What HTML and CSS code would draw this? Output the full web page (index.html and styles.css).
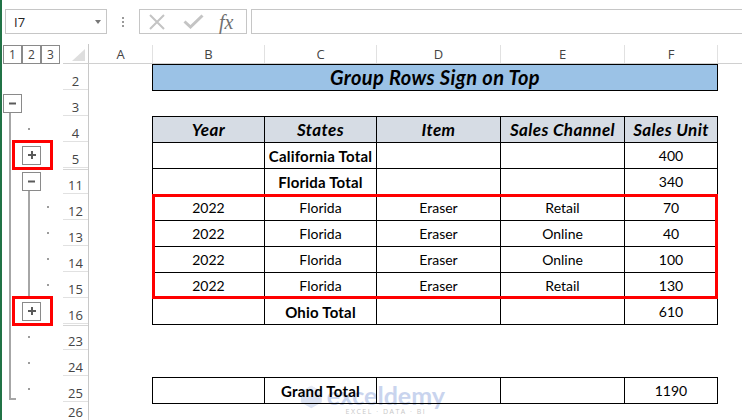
FILE: index.html
```html
<!DOCTYPE html>
<html lang="en">

<head>
    <meta charset="UTF-8">
    <meta name="viewport" content="width=device-width, initial-scale=1.0">
    <title>Group Rows Sign on Top</title>
    <link rel="stylesheet" href="styles.css">
</head>

<body>
    <div class="app">
        <div class="formula-bar">
            <div class="name-box"><span>I7</span><span class="caret"></span></div>
            <div class="grip"><i></i><i></i><i></i></div>
            <div class="fx-buttons">
                <svg class="fx-cancel" width="18" height="16" viewBox="0 0 18 16">
                    <path d="M2 1L16 15M16 1L2 15" stroke="#c4c4c4" stroke-width="2" fill="none" />
                </svg>
                <svg class="fx-enter" width="21" height="15" viewBox="0 0 21 15">
                    <path d="M1.5 7.5L7.5 13L19.5 1.5" stroke="#c4c4c4" stroke-width="3" fill="none" />
                </svg>
                <span class="fx-label">fx</span>
            </div>
            <div class="formula-input"></div>
        </div>

        <div class="sheet">
            <div class="levels"><span>1</span><span>2</span><span>3</span></div>
            <div class="corner">
                <svg width="13" height="12" viewBox="0 0 13 12">
                    <polygon points="13,0 13,12 0,12" fill="#dedede" />
                </svg>
            </div>
            <div class="col-heads">
                <div class="ch ch-a">A</div>
                <div class="ch ch-b">B</div>
                <div class="ch ch-c">C</div>
                <div class="ch ch-d">D</div>
                <div class="ch ch-e">E</div>
                <div class="ch ch-f">F</div>
                <div class="ch ch-g"></div>
            </div>

            <!-- outline gutter: level 1 / 2 / 3 columns -->
            <div class="outline">
                <div class="vline l1"></div>
                <div class="vline l2"></div>
                <div class="btn c2 r2"><svg width="7" height="7"><path d="M0 3.5h7" stroke="#5a5a5a" stroke-width="2" /></svg></div>
                <div class="dot c3 r3"></div>
                <div class="btn c3 r4"><svg width="8" height="8"><path d="M0 4h8M4 0v8" stroke="#5a5a5a" stroke-width="2" /></svg></div>
                <div class="btn c3 r5"><svg width="7" height="7"><path d="M0 3.5h7" stroke="#5a5a5a" stroke-width="2" /></svg></div>
                <div class="dot c4 r6"></div>
                <div class="dot c4 r7"></div>
                <div class="dot c4 r8"></div>
                <div class="dot c4 r9"></div>
                <div class="btn c3 r10"><svg width="8" height="8"><path d="M0 4h8M4 0v8" stroke="#5a5a5a" stroke-width="2" /></svg></div>
                <div class="dot c3 r11"></div>
                <div class="dot c3 r12"></div>
                <div class="dot c3 r13"></div>
                <div class="mark mark-a"></div>
                <div class="mark mark-b"></div>
            </div>

            <div class="row-heads">
                <div class="rh">2</div>
                <div class="rh">3</div>
                <div class="rh">4</div>
                <div class="rh">5</div>
                <div class="rh gap">11</div>
                <div class="rh">12</div>
                <div class="rh">13</div>
                <div class="rh">14</div>
                <div class="rh">15</div>
                <div class="rh">16</div>
                <div class="rh gap">23</div>
                <div class="rh">24</div>
                <div class="rh">25</div>
                <div class="rh last">26</div>
            </div>

            <div class="cells">
                <div class="title">Group Rows Sign on Top</div>

                <div class="wrap">
                    <table class="data">
                        <colgroup>
                            <col class="w-year">
                            <col class="w-state">
                            <col class="w-item">
                            <col class="w-channel">
                            <col class="w-unit">
                        </colgroup>
                        <tr>
                            <th>Year</th>
                            <th>States</th>
                            <th>Item</th>
                            <th>Sales Channel</th>
                            <th>Sales Unit</th>
                        </tr>
                        <tr>
                            <td></td>
                            <td class="sum">California Total</td>
                            <td></td>
                            <td></td>
                            <td>400</td>
                        </tr>
                        <tr>
                            <td></td>
                            <td class="sum">Florida Total</td>
                            <td></td>
                            <td></td>
                            <td>340</td>
                        </tr>
                        <tr>
                            <td>2022</td>
                            <td>Florida</td>
                            <td>Eraser</td>
                            <td>Retail</td>
                            <td>70</td>
                        </tr>
                        <tr>
                            <td>2022</td>
                            <td>Florida</td>
                            <td>Eraser</td>
                            <td>Online</td>
                            <td>40</td>
                        </tr>
                        <tr>
                            <td>2022</td>
                            <td>Florida</td>
                            <td>Eraser</td>
                            <td>Online</td>
                            <td>100</td>
                        </tr>
                        <tr>
                            <td>2022</td>
                            <td>Florida</td>
                            <td>Eraser</td>
                            <td>Retail</td>
                            <td>130</td>
                        </tr>
                        <tr>
                            <td></td>
                            <td class="sum">Ohio Total</td>
                            <td></td>
                            <td></td>
                            <td>610</td>
                        </tr>
                    </table>
                    <div class="highlight"></div>
                </div>

                <table class="data grand">
                    <colgroup>
                        <col class="w-year">
                        <col class="w-state">
                        <col class="w-item">
                        <col class="w-channel">
                        <col class="w-unit">
                    </colgroup>
                    <tr>
                        <td></td>
                        <td class="sum">Grand Total</td>
                        <td></td>
                        <td></td>
                        <td>1190</td>
                    </tr>
                </table>

                <div class="watermark">
                    <svg width="26" height="28" viewBox="0 0 26 28">
                        <polygon points="13,1 25,8 25,20 13,27 1,20 1,8" fill="#dbe2f2" />
                        <polygon points="13,1 25,8 13,14 1,8" fill="#e8ecf6" />
                    </svg>
                    <div class="wm-text">
                        <span class="wm-name">exceldemy</span>
                        <span class="wm-sub">EXCEL · DATA · BI</span>
                    </div>
                </div>
            </div>
        </div>
    </div>
</body>

</html>
```

FILE: styles.css
```css
* {
    box-sizing: border-box;
}

body {
    margin: 0;
    background-color: #fff;
    font-family: 'Open Sans', sans-serif;
    color: #333;
}

.app {
    width: 742px;
    height: 420px;
    overflow: hidden;
    border-left: 2px solid #217346;
}

/* formula bar */
.formula-bar {
    display: flex;
    height: 44px;
    padding-top: 9px;
}

.name-box {
    width: 102px;
    height: 25px;
    margin-left: 3px;
    border: 1px solid #c6c6c6;
    display: flex;
    align-items: center;
    justify-content: space-between;
    padding: 0 5px 0 8px;
    font-size: 13px;
    color: #222;
}

.caret {
    border-left: 3.5px solid transparent;
    border-right: 3.5px solid transparent;
    border-top: 4px solid #777;
}

.grip {
    width: 32px;
    height: 25px;
    display: flex;
    flex-direction: column;
    align-items: center;
    justify-content: center;
    gap: 2px;
}

.grip i {
    width: 2px;
    height: 2px;
    background-color: #9a9a9a;
}

.fx-buttons {
    width: 108px;
    height: 25px;
    border: 1px solid #c6c6c6;
    display: flex;
    align-items: center;
    padding-left: 8px;
}

.fx-enter {
    margin-left: 17px;
}

.fx-label {
    margin-left: 15px;
    font-family: 'Liberation Serif', serif;
    font-style: italic;
    font-size: 20px;
    color: #707070;
    line-height: 1;
}

.formula-input {
    flex: 1;
    height: 25px;
    margin-left: 4px;
    border: 1px solid #c6c6c6;
    border-right: none;
}

/* sheet */
.sheet {
    display: grid;
    grid-template-columns: 61px 26px 1fr;
    grid-template-rows: 20px 356px;
}

.levels {
    display: flex;
    padding: 1px 0 0 1px;
}

.levels span {
    width: 19px;
    height: 19px;
    border: 1px solid #8a8a8a;
    font-size: 12px;
    line-height: 17px;
    text-align: center;
    color: #444;
}

.corner {
    display: flex;
    justify-content: flex-end;
    align-items: flex-end;
    padding: 0 3px 2px 0;
    border-right: 1px solid #c8c8c8;
    border-bottom: 1px solid #d0d0d0;
}

.col-heads {
    display: flex;
    padding-top: 1px;
    border-bottom: 1px solid #d0d0d0;
}

.ch {
    font-size: 13px;
    line-height: 18px;
    text-align: center;
    color: #444;
    border-left: 1px solid #e1e1e1;
}

.ch-a {
    width: 63px;
    border-left: none;
}

.ch-b,
.ch-c {
    width: 112px;
}

.ch-d,
.ch-e {
    width: 124px;
}

.ch-f {
    width: 93px;
}

.ch-g {
    flex: 1;
}

/* outline gutter */
.outline {
    display: grid;
    grid-template-columns: 1px 19px 19px 19px 3px;
    grid-template-rows: repeat(14, 26px);
    position: relative;
}

.btn {
    width: 19px;
    height: 19px;
    align-self: center;
    border: 1px solid #8a8a8a;
    background-color: #fff;
    display: flex;
    align-items: center;
    justify-content: center;
    z-index: 1;
}

.dot {
    width: 2px;
    height: 2px;
    margin: 12px 0 0 6px;
    background-color: #9c9c9c;
}

.vline {
    margin: 23px 0 2px 6px;
    border-left: 2px solid #a6a6a6;
}

.vline.l1 {
    grid-column: 2;
    grid-row: 2 / 14;
    width: 7px;
    border-bottom: 2px solid #a6a6a6;
}

.vline.l2 {
    grid-column: 3;
    grid-row: 5 / 10;
    width: 2px;
}

.c2 { grid-column: 2; }
.c3 { grid-column: 3; }
.c4 { grid-column: 4; }

.r2 { grid-row: 2; }
.r3 { grid-row: 3; }
.r4 { grid-row: 4; }
.r5 { grid-row: 5; }
.r6 { grid-row: 6; }
.r7 { grid-row: 7; }
.r8 { grid-row: 8; }
.r9 { grid-row: 9; }
.r10 { grid-row: 10; }
.r11 { grid-row: 11; }
.r12 { grid-row: 12; }
.r13 { grid-row: 13; }

.mark {
    position: absolute;
    left: 10px;
    width: 41px;
    height: 30px;
    border: 3px solid #ff0000;
    z-index: 2;
}

.mark-a {
    top: 76px;
}

.mark-b {
    top: 232px;
}

/* row headers */
.row-heads {
    border-right: 1px solid #c8c8c8;
}

.rh {
    height: 26px;
    padding-top: 8px;
    font-size: 13px;
    line-height: 18px;
    text-align: center;
    color: #444;
    border-bottom: 1px solid #e1e1e1;
}

.rh.gap {
    box-shadow: inset 0 1px 0 #fff, inset 0 2px 0 #d6d6d6;
}

.rh.last {
    height: 18px;
    padding-top: 3px;
    line-height: 14px;
    border-bottom: none;
}

/* cells */
.cells {
    position: relative;
    padding-left: 63px;
    font-family: 'Lato', 'Liberation Sans', sans-serif;
    color: #000;
}

.title {
    width: 566px;
    height: 27px;
    border: 1px solid #000;
    background-color: #9bc2e6;
    font-size: 20px;
    font-weight: bold;
    font-style: italic;
    letter-spacing: 0.4px;
    line-height: 25px;
    text-align: center;
}

.wrap {
    position: relative;
    margin-top: 25px;
}

.data {
    border-collapse: collapse;
    font-size: 14px;
}

.data tr {
    height: 26px;
}

.data th,
.data td {
    border: 1px solid #000;
    padding: 0;
    text-align: center;
}

.data th {
    background-color: #d6dce4;
    font-size: 17px;
    font-weight: bold;
    font-style: italic;
    letter-spacing: 0.4px;
}

.data td.sum {
    font-size: 15px;
    font-weight: bold;
    letter-spacing: 0.2px;
}

.w-year,
.w-state {
    width: 112px;
}

.w-item,
.w-channel {
    width: 124px;
}

.w-unit {
    width: 93px;
}

/* grand total sits above the faint logo so its text stays dark */
.grand {
    position: relative;
    z-index: 1;
    margin-top: 52px;
}

.highlight {
    position: absolute;
    top: 78px;
    left: 0;
    width: 566px;
    height: 105px;
    border: 3px solid #ff0000;
}

.watermark {
    position: absolute;
    left: 211px;
    top: 317px;
    width: 145px;
    height: 40px;
    display: flex;
    align-items: flex-start;
    gap: 4px;
    padding-top: 2px;
}

.wm-text {
    display: flex;
    flex-direction: column;
    align-items: center;
}

.wm-name {
    font-family: 'Lato', sans-serif;
    font-weight: bold;
    font-size: 25px;
    line-height: 24px;
    color: #c9d4ee;
}

.wm-sub {
    font-family: 'Open Sans', sans-serif;
    font-size: 7px;
    letter-spacing: 1.5px;
    color: #c8c8c8;
}
```
